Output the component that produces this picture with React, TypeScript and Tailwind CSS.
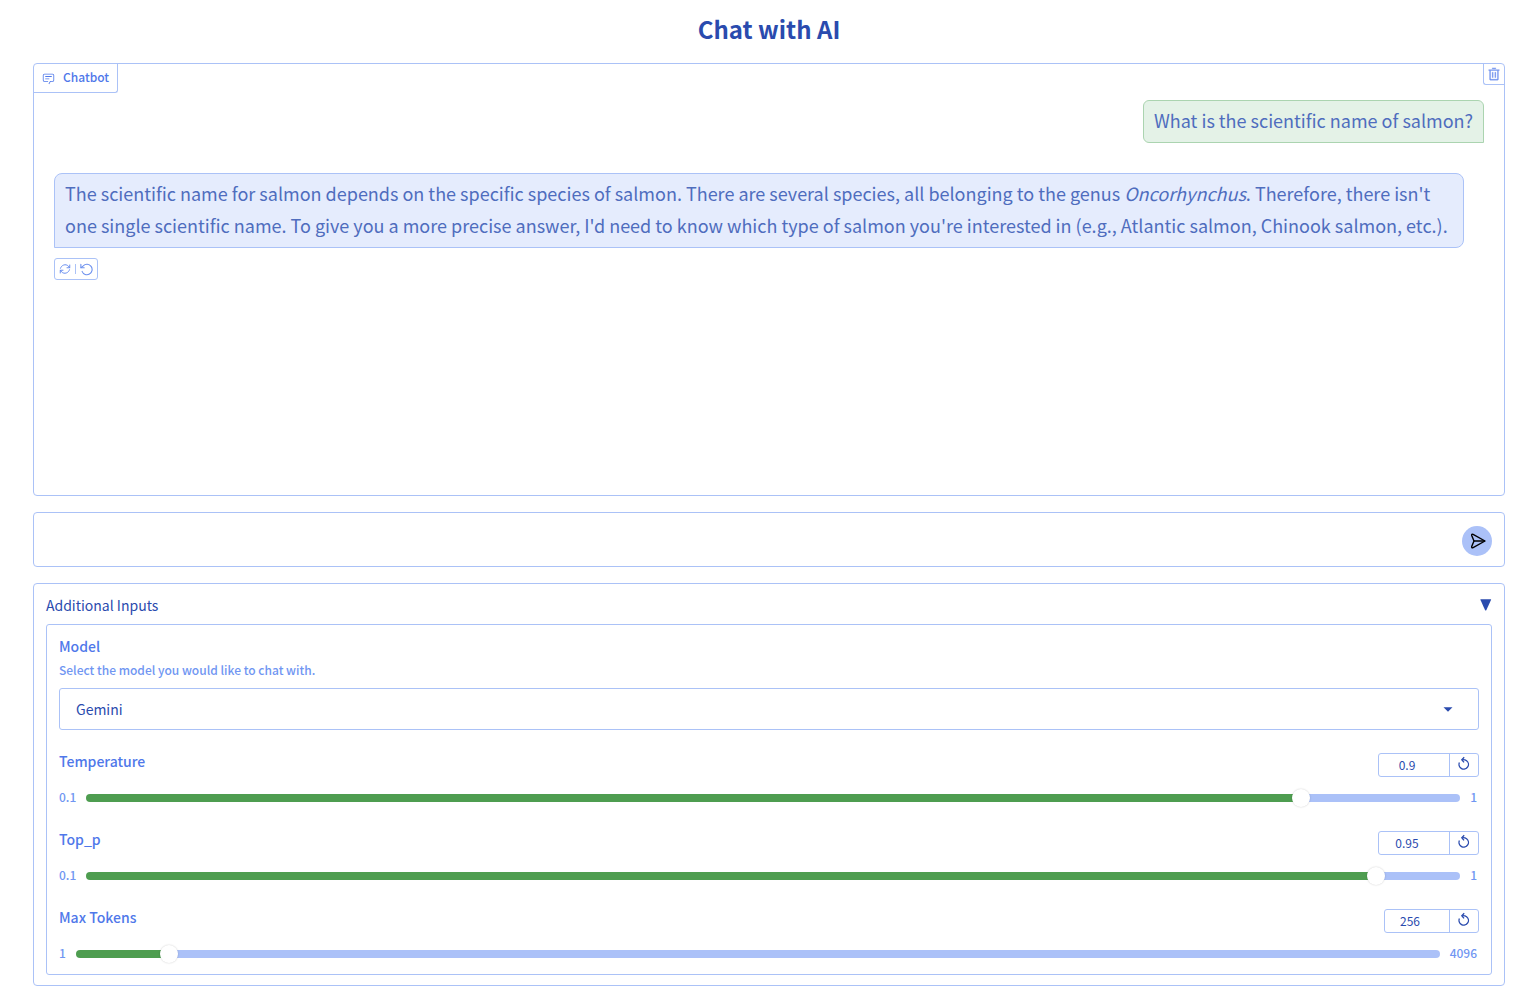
import React, { useState } from "react";

function ChatIcon() {
  return (
    <svg viewBox="0 0 32 32" fill="currentColor" className="size-[13px]" aria-hidden="true">
      <path d="M17.74 30L16 29l4-7h6a2 2 0 0 0 2-2V8a2 2 0 0 0-2-2H6a2 2 0 0 0-2 2v12a2 2 0 0 0 2 2h9v2H6a4 4 0 0 1-4-4V8a4 4 0 0 1 4-4h20a4 4 0 0 1 4 4v12a4 4 0 0 1-4 4h-4.84Z" />
      <path d="M8 10h16v2H8zm0 6h10v2H8z" />
    </svg>
  );
}

function TrashIcon() {
  return (
    <svg
      viewBox="0 0 32 32"
      fill="currentColor"
      stroke="currentColor"
      strokeWidth="0.8"
      className="size-[14px]"
      aria-hidden="true"
    >
      <path d="M12 12h2v12h-2zm6 0h2v12h-2z" />
      <path d="M4 6v2h2v20a2 2 0 0 0 2 2h16a2 2 0 0 0 2-2V8h2V6zm4 22V8h16v20zm4-26h8v2h-8z" />
    </svg>
  );
}

function RetryIcon() {
  return (
    <svg
      viewBox="0 0 24 24"
      fill="none"
      stroke="currentColor"
      strokeWidth="2"
      strokeLinecap="round"
      strokeLinejoin="round"
      className="size-3"
      aria-hidden="true"
    >
      <path d="M21.5 4v5.5h-5.5" />
      <path d="M2.5 20v-5.5h5.5" />
      <path d="M3 10.5A9.4 9.4 0 0 1 18.6 6L21.5 9.5M2.5 14.5L5.4 18A9.4 9.4 0 0 0 21 13.5" />
    </svg>
  );
}

function UndoIcon() {
  return (
    <svg
      viewBox="0 0 24 24"
      fill="none"
      stroke="currentColor"
      strokeWidth="2"
      strokeLinecap="round"
      strokeLinejoin="round"
      className="size-[13px]"
      aria-hidden="true"
    >
      <path d="M2 8.5L6 5.2A9.6 9.6 0 1 1 3.8 15.5" />
      <path d="M1.6 2.6v6.2h6.2" />
    </svg>
  );
}

function ResetIcon() {
  return (
    <svg
      viewBox="0 0 12 14"
      fill="none"
      stroke="currentColor"
      strokeWidth="1.3"
      className="mb-1 h-[14px] w-3"
      aria-hidden="true"
    >
      <path d="M1.4 6.6A4.7 4.7 0 1 0 8.6 4.7Q7.2 3.6 4.4 3.7" />
      <path d="M6.2 1.2L3.8 3.7L6 6.4" />
    </svg>
  );
}

function SendIcon() {
  return (
    <svg
      viewBox="0 0 16 16"
      fill="none"
      stroke="currentColor"
      strokeWidth="1.4"
      strokeLinecap="round"
      strokeLinejoin="round"
      className="ml-px size-4"
      aria-hidden="true"
    >
      <path d="M15 8L3.1 1.4Q1.4 0.8 1.7 2.4L4 8L1.7 13.6Q1.4 15.2 3.1 14.6Z" />
      <path d="M4 8H14.4" />
    </svg>
  );
}

type SliderProps = {
  id: string;
  label: string;
  min: number;
  max: number;
  step: number;
  initial: number;
  numberWidth: string;
};

function SliderField({ id, label, min, max, step, initial, numberWidth }: SliderProps) {
  const [value, setValue] = useState(initial);
  const percent = ((value - min) / (max - min)) * 100;
  return (
    <div>
      <div className="flex items-start justify-between">
        <label htmlFor={id} className="text-[14px] leading-4 font-medium text-[#4f78ea]">
          {label}
        </label>
        <div className="flex h-6 overflow-hidden rounded-[3px] border border-[#abc2f7]">
          <input
            type="number"
            aria-label={`${label} value`}
            min={min}
            max={max}
            step={step}
            value={value}
            onChange={(e) => setValue(Number(e.target.value))}
            className={`${numberWidth} [appearance:textfield] bg-transparent pr-[14px] text-center text-[12px] leading-[22px] text-[#2a4bae] outline-none [&::-webkit-inner-spin-button]:appearance-none [&::-webkit-outer-spin-button]:appearance-none`}
          />
          <button
            type="button"
            aria-label={`Reset ${label}`}
            onClick={() => setValue(initial)}
            className="flex w-[29px] items-center justify-center border-l border-[#abc2f7] text-[#2a4bae]"
          >
            <ResetIcon />
          </button>
        </div>
      </div>
      <div className="mt-3 flex h-[18px] items-center gap-[10px] pr-[2px] text-[12px] leading-[18px] font-medium text-[#7096f2]">
        <span className="pb-[2px]">{min}</span>
        <input
          id={id}
          type="range"
          min={min}
          max={max}
          step={step}
          value={value}
          onChange={(e) => setValue(Number(e.target.value))}
          style={{
            backgroundImage: `linear-gradient(to right, #4e9d50 ${percent}%, #abc1f8 ${percent}%)`,
          }}
          className="h-2 min-w-0 flex-1 appearance-none rounded-full [&::-webkit-slider-thumb]:size-[18px] [&::-webkit-slider-thumb]:appearance-none [&::-webkit-slider-thumb]:rounded-full [&::-webkit-slider-thumb]:bg-white [&::-webkit-slider-thumb]:shadow-[0_0_2px_rgba(0,0,0,0.2)]"
        />
        <span className="pb-[2px]">{max}</span>
      </div>
    </div>
  );
}

export default function App() {
  const [open, setOpen] = useState(true);
  return (
    <main className="flex flex-col gap-4 bg-white px-[33px] pb-3 font-['Noto_Sans_CJK_SC',sans-serif] text-[#2a4bae]">
      <h1 className="mt-[11px] mb-px text-center text-[24px] leading-[35px] font-bold">Chat with AI</h1>

      <section className="flex min-h-[433px] flex-col overflow-hidden rounded border border-[#abc2f7]">
        <div className="flex items-start justify-between">
          <h2 className="flex h-[29px] items-center gap-2 rounded-br-[3px] border-r border-b border-[#abc2f7] px-2 text-[12px] leading-[18px] font-medium text-[#4f78ea]">
            <ChatIcon />
            <span className="pb-[2px]">Chatbot</span>
          </h2>
          <button
            type="button"
            aria-label="Clear conversation"
            className="flex size-[21px] items-center justify-center rounded-bl-[3px] border-b border-l border-[#abc2f7] text-[#6b8fee]"
          >
            <TrashIcon />
          </button>
        </div>
        <div className="flex flex-col px-5 pt-[7px] text-[18px] leading-8 text-[#4f6dbe]">
          <p className="self-end rounded-t-md rounded-bl-md border border-[#abd4b0] bg-[#e4f2e7] px-[10px] pt-[3px] pb-[6px]">
            What is the scientific name of salmon?
          </p>
          <p className="mt-[30px] mr-5 self-start rounded-t-lg rounded-br-lg border border-[#abc2f7] bg-[#e5ecfd] px-[10px] pt-[3px] pb-[6px]">
            The scientific name for salmon depends on the specific species of salmon. There are several
            species, all belonging to the genus <em>Oncorhynchus</em>. Therefore, there isn't one single
            scientific name. To give you a more precise answer, I'd need to know which type of salmon
            you're interested in (e.g., Atlantic salmon, Chinook salmon, etc.).
          </p>
          <div className="mt-[10px] flex h-[22px] items-center gap-1 self-start rounded-[3px] border border-[#abc2f7] px-1 text-[#6b8fee]">
            <button type="button" aria-label="Retry">
              <RetryIcon />
            </button>
            <span className="h-[10px] w-px bg-[#abc2f7]" />
            <button type="button" aria-label="Undo">
              <UndoIcon />
            </button>
          </div>
        </div>
      </section>

      <form
        className="flex h-[55px] items-center rounded border border-[#abc2f7] px-3 pt-[2px]"
        onSubmit={(e) => e.preventDefault()}
      >
        <input type="text" aria-label="Message" className="min-w-0 flex-1 text-[14px] outline-none" />
        <button
          type="submit"
          aria-label="Send"
          className="flex size-[30px] items-center justify-center rounded-full bg-[#abc1f8] text-black"
        >
          <SendIcon />
        </button>
      </form>

      <section className="rounded border border-[#abc2f7] px-3 pt-[11px] pb-[10px]">
        <button
          type="button"
          aria-expanded={open}
          onClick={() => setOpen(!open)}
          className="flex w-full items-center justify-between text-[14px] leading-5"
        >
          Additional Inputs
          <svg viewBox="0 0 12 12" fill="currentColor" className="size-3" aria-hidden="true">
            <path d="M0.3 0.6Q0.3 0.2 0.8 0.2H10.7Q11.2 0.2 11.1 0.7L6.4 11Q5.7 12 5 11Z" />
          </svg>
        </button>
        {open && (
          <div className="mt-[9px] rounded-[3px] border border-[#abc2f7] px-3 py-[11px]">
            <label htmlFor="model" className="block text-[14px] leading-5 font-medium text-[#4f78ea]">
              Model
            </label>
            <p id="model-info" className="mt-[5px] text-[12px] leading-[18px] font-medium text-[#7096f2]">
              Select the model you would like to chat with.
            </p>
            <div className="mt-[9px] grid items-center">
              <select
                id="model"
                aria-describedby="model-info"
                className="col-start-1 row-start-1 h-[42px] w-full appearance-none rounded-[3px] border border-[#abc2f7] bg-white px-4 text-[14px]"
              >
                <option>Gemini</option>
              </select>
              <svg
                viewBox="0 0 10 5"
                fill="currentColor"
                className="pointer-events-none col-start-1 row-start-1 mr-[26px] h-[5px] w-[10px] justify-self-end"
                aria-hidden="true"
              >
                <path d="M0.5 0.2H9.5L5 4.8Z" />
              </svg>
            </div>
            <div className="mt-[23px] flex flex-col gap-6">
              <SliderField id="temperature" label="Temperature" min={0.1} max={1} step={0.01} initial={0.9} numberWidth="w-[70px]" />
              <SliderField id="top-p" label="Top_p" min={0.1} max={1} step={0.01} initial={0.95} numberWidth="w-[70px]" />
              <SliderField id="max-tokens" label="Max Tokens" min={1} max={4096} step={1} initial={256} numberWidth="w-[64px]" />
            </div>
          </div>
        )}
      </section>
    </main>
  );
}
